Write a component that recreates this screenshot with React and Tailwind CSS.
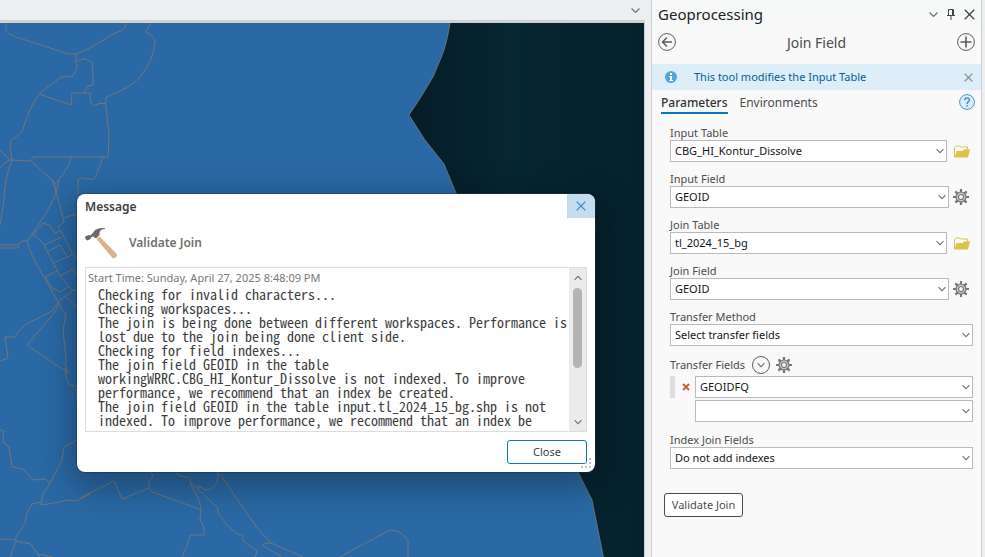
import React from "react";

const LINES = [
  "Checking for invalid characters...",
  "Checking workspaces...",
  "The join is being done between different workspaces. Performance is",
  "lost due to the join being done client side.",
  "Checking for field indexes...",
  "The join field GEOID in the table",
  "workingWRRC.CBG_HI_Kontur_Dissolve is not indexed. To improve",
  "performance, we recommend that an index be created.",
  "The join field GEOID in the table input.tl_2024_15_bg.shp is not",
  "indexed. To improve performance, we recommend that an index be",
];

const BOUNDARIES = [
  "M6 23V31Q8 34 16 37L50 48 68 54H76Q90 49 102 41 112 33 123 30L127 23",
  "M151 23L146 32Q153 35 155 41 154 60 140 77 131 88 108 96 105 98 105.5 103L109 135 108 157",
  "M76 54V60L77 68 73 76 61 77 39 94 71 105 72 93H90L91 103 94 106 99 103.5H106",
  "M77 61L84 58.5 92 62 93.5 85 88 86 84 93",
  "M39 94Q30 106 22 132 17 137 11 140L10 146 12 160",
  "M0 150L10 160 31 161 33 157H108",
  "M31 161L52 180Q56 186 56 193 52 205 33 233L27 242Q32 258 44 277L58 302",
  "M71 157Q70 167 55 184M53 180L64 222 58 227 63 235 72 253 78 260M63 218L77 214M59 180L56 193",
  "M103 157L95 178Q92 180 88 179 78 176 78 181V194",
  "M12 160Q4 180 4 200L0 225M0 168Q4 162 10 160",
  "M0 245H17L25 240 27 242M0 248H18L19 245",
  "M33 235L43 223 50 226 55 233 60 231M33 235L40 240 44 245 53 263 60 276 72 290H77",
  "M44 245L62 237M47 252L60 245 67 257M53 263L72 255M45 277L57 271M60 276L73 269 77 277M45 277L52 288 60 292 68 287M58 302L73 290M65 297L77 307",
  "M58 302L62 310 66 314 63 330 66 360 65 363 68 373L27 345 55 312 59 303",
  "M58 302L52 311 40 317 25 325 18 332 15 337H5L8 358 0 361",
  "M65 368L66 378 70 385 76 386 77 405",
  "M0 430L4 431 3 436 4 443 9 447 11 460 12 467 23 469 33 480 45 479 51 483",
  "M77 440L64 447 62 460 50 483 43 494 41 505 60 502 66 500 77 501 90 494M41 502L32 504 27 513 25 523 16 537V540L0 539",
  "M16 541L31 544 40 557M16 541L10 557M37 554L53 557",
  "M80 498L114 481 122 499 149 488M151 472L153 476 149 482Q148 490 152 492L202 510",
  "M175 472L180 476 190 478 191 485 198 498 201 508 200 520 204 527V535H190L187 545 182 557",
  "M191 483L218 508 218 513 227 525 237 534 243 535 243 541 257 551 255 557",
  "M197 488L199 486 205 490Q217 490 218 478L217 472 222 477 257 528 271 543 303 557",
  "M271 543Q262 543 263 546L282 557M340 557Q360 546 390 530L400 532 408 540V557",
];

function Chevron({ className = "h-2 w-2" }) {
  return (
    <svg viewBox="0 0 8 8" className={className} fill="none" stroke="#707070" strokeWidth="1.1" aria-hidden="true">
      <path d="M0.5 2.2L4 5.7L7.5 2.2" />
    </svg>
  );
}

function Cross({ className }) {
  return (
    <svg viewBox="0 0 10 10" className={className} fill="none" stroke="currentColor" strokeWidth="1.2" aria-hidden="true">
      <path d="M0.7 0.7L9.3 9.3M9.3 0.7L0.7 9.3" />
    </svg>
  );
}

function Gear() {
  return (
    <svg viewBox="0 0 16 16" className="size-4" aria-hidden="true">
      <g stroke="#777" strokeWidth="2.2">
        <path d="M8 0V16M0 8H16M2.4 2.4L13.6 13.6M13.6 2.4L2.4 13.6" />
      </g>
      <circle cx="8" cy="8" r="5" fill="#c8c8c8" stroke="#777" strokeWidth="1.2" />
      <circle cx="8" cy="8" r="2.5" fill="#f9f9f9" stroke="#777" strokeWidth="1.2" />
    </svg>
  );
}

function Folder() {
  return (
    <svg viewBox="0 0 16 13" className="h-[13px] w-4" aria-hidden="true">
      <path d="M0.5 12V2.5L2 1H5.5L6.5 2H13.5V4" fill="#f9f9f9" stroke="#dcc34a" />
      <path d="M0.5 12.5L2.5 6H8.5L10.5 4.3H16L14 12.5Z" fill="#dcc34a" />
    </svg>
  );
}

function Combo({ id, value, label }) {
  return (
    <div className="relative min-w-0 flex-1">
      <select
        id={id}
        aria-label={label}
        defaultValue={value}
        className="block h-[22px] w-full appearance-none border border-[#bababd] bg-white px-1 text-[11px] text-[#151515]"
      >
        <option>{value}</option>
      </select>
      <span className="pointer-events-none absolute inset-y-0 right-[3px] flex items-center">
        <Chevron />
      </span>
    </div>
  );
}

function Field({ id, label, value, icon }) {
  return (
    <div>
      <label htmlFor={id} className="block h-4 leading-[18px]">{label}</label>
      <div className="flex items-center">
        <Combo id={id} value={value} />
        {icon === "folder" && (
          <button type="button" aria-label={"Browse " + label} className="ml-[7px] mr-[3px]"><Folder /></button>
        )}
        {icon === "gear" && (
          <button type="button" aria-label={label + " options"} className="ml-1 mr-1"><Gear /></button>
        )}
      </div>
    </div>
  );
}

function MapView() {
  return (
    <svg viewBox="0 23 644 534" preserveAspectRatio="xMinYMin slice" className="absolute inset-0 h-full w-full" role="img" aria-label="Map">
      <defs>
        <linearGradient id="sea" x1="0" x2="1" y1="0" y2="0">
          <stop offset="0" stopColor="#061c26" />
          <stop offset="0.45" stopColor="#062632" />
          <stop offset="1" stopColor="#05212c" />
        </linearGradient>
      </defs>
      <rect x="400" y="23" width="244" height="534" fill="url(#sea)" />
      <path
        d="M-2 20H450.5Q447 44 441 58L433 77 419 100 409 115 425 140 444 164 456 193 500 300 578 472 592 500 604 560H-2Z"
        fill="#2a69a5"
        stroke="#7c7a78"
        strokeWidth="0.8"
      />
      <g fill="none" stroke="#7a7775" strokeWidth="0.9">
        {BOUNDARIES.map((d) => <path key={d} d={d} />)}
      </g>
    </svg>
  );
}

function MessageDialog() {
  return (
    <section
      role="dialog"
      aria-label="Message"
      className="absolute left-[77px] top-[194px] flex w-[518px] flex-col overflow-hidden rounded-lg bg-white shadow-[0_10px_34px_6px_rgba(0,0,0,0.3),0_0_1px_1px_rgba(40,60,80,0.5)]"
    >
      <header className="flex h-6 justify-between pl-2">
        <h2 className="text-[12px] font-semibold leading-[26px] text-[#404040]">Message</h2>
        <button aria-label="Close message" className="flex w-7 items-center justify-center bg-[#c5dbee] text-[#2a8fd0]">
          <Cross className="size-[10px]" />
        </button>
      </header>
      <div className="flex h-[49px] items-center gap-3 px-2">
        <svg viewBox="0 0 32 32" className="size-8" aria-hidden="true">
          <path d="M14.5 9.5L11.5 12L27.5 31L29 31.5L32 29L31.8 27Z" fill="#d5b48d" />
          <path d="M0 9.5L4 8L5.5 8.5L8.5 5Q11 0.5 20 1L20 1.8Q17.5 2 15.5 3.5Q14 5 14.5 8L11 11.5L8 9.5L6 10.5L5.5 12L2.5 13.5L0.5 12Z" fill="#6b6b6b" />
        </svg>
        <h3 className="text-[12px] font-semibold leading-5 text-[#707070]">Validate Join</h3>
      </div>
      <div className="mx-2 flex h-[165px] border border-[#dcdcdc]">
        <div className="min-w-0 flex-1 overflow-hidden pl-0.5 pt-0.5">
          <p className="h-[17px] text-[11px] leading-4 text-[#777]">Start Time: Sunday, April 27, 2025 8:48:09 PM</p>
          <pre className="pl-[10px] font-['Noto_Sans_Mono_CJK_SC','Liberation_Mono',monospace] text-[14px] leading-[14px] text-[#3d3d3d]">
            {LINES.join("\n")}
          </pre>
        </div>
        <div className="flex w-[17px] flex-col items-center bg-[#ebebeb]">
          <button aria-label="Scroll up" className="flex h-5 items-center"><Chevron className="size-2 rotate-180" /></button>
          <span className="h-20 w-[9px] rounded-full bg-[#b4b4b4]" />
          <button aria-label="Scroll down" className="mt-auto flex h-[18px] items-center"><Chevron /></button>
        </div>
      </div>
      <footer className="relative flex h-10 justify-end px-2 pt-2">
        <button className="h-6 w-20 rounded-[3px] border border-[#0078d4] bg-white text-[11px] leading-[22px] text-[#404040]">Close</button>
        <svg viewBox="0 0 10 10" className="absolute bottom-1 right-1 size-[10px]" fill="#c2c2c2" aria-hidden="true">
          <path d="M8 0h2v2h-2zM8 4h2v2h-2zM4 4h2v2h-2zM8 8h2v2h-2zM4 8h2v2h-2zM0 8h2v2h-2z" />
        </svg>
      </footer>
    </section>
  );
}

function GeoprocessingPane() {
  return (
    <aside className="flex w-[331px] shrink-0 flex-col border-x border-[#cfd0d4] bg-[#f9f9f9]">
      <header className="flex h-7 items-center justify-between bg-[#f7f8f8] pl-[6px] pr-[6px] text-[#444]">
        <h1 className="text-[15px] text-[#222]">Geoprocessing</h1>
        <div className="flex items-center gap-[9px]">
          <button aria-label="Pane options"><Chevron className="size-[9px]" /></button>
          <button aria-label="Pin">
            <svg viewBox="0 0 8 11" className="h-[11px] w-2" fill="none" stroke="#444" aria-hidden="true">
              <path d="M1.5 6.5V0.5H6.5V6.5M5.5 1V6.5M0 6.5H8M4 7V11" />
            </svg>
          </button>
          <button aria-label="Close pane"><Cross className="size-[11px]" /></button>
        </div>
      </header>
      <div className="flex h-9 items-center justify-between px-[6px] pb-2">
        <button aria-label="Back">
          <svg viewBox="0 0 18 18" className="size-[18px]" fill="none" stroke="#5c5c5c" aria-hidden="true">
            <circle cx="9" cy="9" r="8.4" />
            <path d="M14 9H4.5M9 4.5L4.5 9L9 13.5" strokeWidth="1.5" />
          </svg>
        </button>
        <h2 className="text-[14px] text-[#4c4c4c]">Join Field</h2>
        <button aria-label="Add">
          <svg viewBox="0 0 18 18" className="size-[18px]" fill="none" stroke="#5c5c5c" aria-hidden="true">
            <circle cx="9" cy="9" r="8.4" />
            <path d="M9 3.5V14.5M3.5 9H14.5" strokeWidth="1.6" />
          </svg>
        </button>
      </div>
      <div className="flex h-[26px] items-center bg-[#deeef9] pl-[13px] pr-2 text-[11px] text-[#005e95]">
        <svg viewBox="0 0 12 12" className="size-3" aria-hidden="true">
          <circle cx="6" cy="6" r="6" fill="#56a5d8" />
          <path d="M5 2h2v2H5zM4.3 5H7v4h1v1H4.3V9H5V6h-.7z" fill="#fff" />
        </svg>
        <p className="ml-[17px] flex-1">This tool modifies the Input Table</p>
        <button aria-label="Dismiss" className="text-[#7c858b]"><Cross className="size-[9px]" /></button>
      </div>
      <div className="flex h-[34px] items-start justify-between pl-[9px] pr-[6px] pt-1">
        <nav className="flex gap-3 text-[12px] text-[#4c4c4c]">
          <a href="#parameters" className="border-b-2 border-[#007ac2] font-medium leading-[18px] text-[#323232]">Parameters</a>
          <a href="#environments" className="leading-[18px]">Environments</a>
        </nav>
        <button aria-label="Help">
          <svg viewBox="0 0 16 16" className="size-4" fill="none" stroke="#3f97cf" aria-hidden="true">
            <circle cx="8" cy="8" r="7.4" fill="#deeef9" />
            <path d="M5.7 6.2Q5.7 4 8 4Q10.4 4 10.4 6Q10.4 7.2 9 8Q8 8.6 8 10M8 11V12.6" strokeWidth="1.5" />
          </svg>
        </button>
      </div>
      <form className="flex flex-col gap-2 pl-[18px] pr-2 text-[11px] text-[#4c4c4c]" onSubmit={(e) => e.preventDefault()}>
        <Field id="input-table" label="Input Table" value="CBG_HI_Kontur_Dissolve" icon="folder" />
        <Field id="input-field" label="Input Field" value="GEOID" icon="gear" />
        <Field id="join-table" label="Join Table" value="tl_2024_15_bg" icon="folder" />
        <Field id="join-field" label="Join Field" value="GEOID" icon="gear" />
        <Field id="transfer-method" label="Transfer Method" value="Select transfer fields" />
        <fieldset>
          <div className="flex h-[22px] items-center">
            <label htmlFor="transfer-field">Transfer Fields</label>
            <button type="button" aria-label="Add many" className="ml-[7px] flex size-[18px] items-center justify-center rounded-full border border-[#5c5c5c]">
              <Chevron />
            </button>
            <button type="button" aria-label="Transfer field options" className="ml-[6px]"><Gear /></button>
          </div>
          <div className="flex items-center">
            <span className="h-[22px] w-[5px] bg-[#dedede]" />
            <button type="button" aria-label="Remove" className="ml-[7px] mr-[5px] text-[#cc5b34]">
              <svg viewBox="0 0 8 8" className="size-2" stroke="currentColor" strokeWidth="1.8" aria-hidden="true">
                <path d="M1 1L7 7M7 1L1 7" />
              </svg>
            </button>
            <Combo id="transfer-field" value="GEOIDFQ" />
          </div>
          <div className="mb-px mt-0.5 flex pl-[25px]">
            <Combo id="transfer-field-new" value="" label="New transfer field" />
          </div>
        </fieldset>
        <Field id="index-fields" label="Index Join Fields" value="Do not add indexes" />
        <button className="ml-[-6px] mt-4 h-6 w-[79px] rounded-[3px] border border-[#4c4c4c] bg-white leading-[22px]">Validate Join</button>
      </form>
    </aside>
  );
}

export default function App() {
  return (
    <div className="relative flex min-h-screen bg-[#edeef0] pr-[3px] font-['Noto_Sans','Open_Sans',sans-serif]">
      <main className="mr-[6px] flex min-w-0 flex-1 flex-col">
        <div className="flex h-5 items-center justify-end pr-[5px]">
          <button aria-label="View list"><Chevron className="size-[9px]" /></button>
        </div>
        <div className="flex flex-1 flex-col border-r border-t-[3px] border-[#d0d1d3]">
          <div className="relative flex-1 overflow-hidden">
            <MapView />
            <div className="absolute left-0 top-[-23px]">
              <MessageDialog />
            </div>
          </div>
        </div>
      </main>
      <GeoprocessingPane />
    </div>
  );
}
